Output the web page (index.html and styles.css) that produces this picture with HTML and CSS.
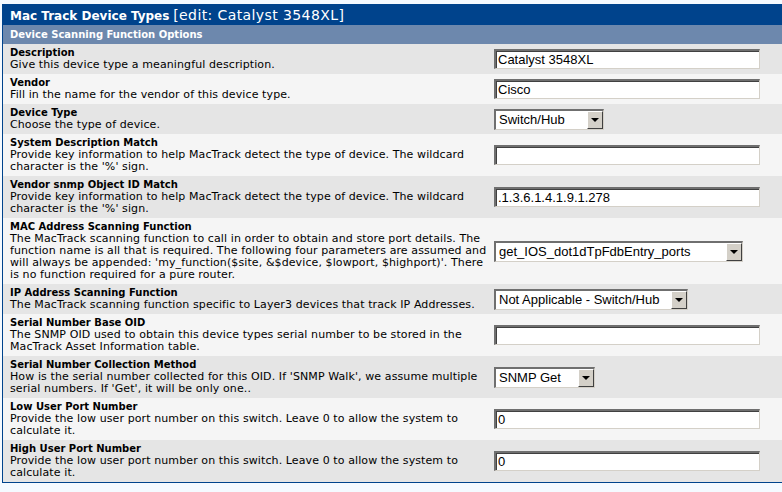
FILE: index.html
```html
<!DOCTYPE html>
<html>
<head>
<meta charset="utf-8">
<title>Mac Track Device Types</title>
<link rel="stylesheet" href="styles.css">
</head>
<body>
<div class="frame">
  <div class="head"><b>Mac Track Device Types</b> <span class="edit">[edit: Catalyst 3548XL]</span></div>
  <div class="sub">Device Scanning Function Options</div>

  <div class="row dark">
    <div class="lab"><div class="t">Description</div><div class="d">Give this device type a meaningful description.</div></div>
    <div class="fld"><input class="txt" type="text" value="Catalyst 3548XL"></div>
  </div>

  <div class="row light">
    <div class="lab"><div class="t">Vendor</div><div class="d">Fill in the name for the vendor of this device type.</div></div>
    <div class="fld"><input class="txt" type="text" value="Cisco"></div>
  </div>

  <div class="row dark">
    <div class="lab"><div class="t">Device Type</div><div class="d">Choose the type of device.</div></div>
    <div class="fld"><span class="combo w110"><select><option>Switch/Hub</option></select></span></div>
  </div>

  <div class="row light">
    <div class="lab"><div class="t">System Description Match</div><div class="d">Provide key information to help MacTrack detect the type of device. The wildcard character is the '%' sign.</div></div>
    <div class="fld"><input class="txt" type="text" value=""></div>
  </div>

  <div class="row dark">
    <div class="lab"><div class="t">Vendor snmp Object ID Match</div><div class="d">Provide key information to help MacTrack detect the type of device. The wildcard character is the '%' sign.</div></div>
    <div class="fld"><input class="txt" type="text" value=".1.3.6.1.4.1.9.1.278"></div>
  </div>

  <div class="row light">
    <div class="lab"><div class="t">MAC Address Scanning Function</div><div class="d">The MacTrack scanning function to call in order to obtain and store port details. The function name is all that is required. The following four parameters are assumed and will always be appended: 'my_function($site, &amp;$device, $lowport, $highport)'. There is no function required for a pure router.</div></div>
    <div class="fld"><span class="combo w249"><select><option>get_IOS_dot1dTpFdbEntry_ports</option></select></span></div>
  </div>

  <div class="row dark">
    <div class="lab"><div class="t">IP Address Scanning Function</div><div class="d">The MacTrack scanning function specific to Layer3 devices that track IP Addresses.</div></div>
    <div class="fld"><span class="combo w194"><select><option>Not Applicable - Switch/Hub</option></select></span></div>
  </div>

  <div class="row light">
    <div class="lab"><div class="t">Serial Number Base OID</div><div class="d">The SNMP OID used to obtain this device types serial number to be stored in the MacTrack Asset Information table.</div></div>
    <div class="fld"><input class="txt" type="text" value=""></div>
  </div>

  <div class="row dark">
    <div class="lab"><div class="t">Serial Number Collection Method</div><div class="d">How is the serial number collected for this OID. If 'SNMP Walk', we assume multiple serial numbers. If 'Get', it will be only one..</div></div>
    <div class="fld"><span class="combo w101"><select><option>SNMP Get</option></select></span></div>
  </div>

  <div class="row light">
    <div class="lab"><div class="t">Low User Port Number</div><div class="d">Provide the low user port number on this switch. Leave 0 to allow the system to calculate it.</div></div>
    <div class="fld"><input class="txt" type="text" value="0"></div>
  </div>

  <div class="row dark">
    <div class="lab"><div class="t">High User Port Number</div><div class="d">Provide the low user port number on this switch. Leave 0 to allow the system to calculate it.</div></div>
    <div class="fld"><input class="txt" type="text" value="0"></div>
  </div>
</div>
</body>
</html>
```

FILE: styles.css
```css
html, body {
  margin: 0;
  padding: 0;
  overflow: hidden;
  background: #f5faff;
}
body {
  padding: 4px 0 0 2px;
  font-family: "DejaVu Sans", Verdana, sans-serif;
}
.frame {
  width: 800px;
  border: 1px solid #00438c;
  background: #f5f5f5;
}
.head {
  background: #00438c;
  color: #fff;
  font-size: 12px;
  height: 20px;
  line-height: 20px;
  padding-left: 7px;
  white-space: nowrap;
}
.head .edit {
  font-size: 14px;
  letter-spacing: 0.4px;
}
.sub {
  background: #6d88ad;
  color: #fff;
  font-size: 10px;
  font-weight: bold;
  height: 19px;
  line-height: 19px;
  padding-left: 7px;
}
.row {
  display: flex;
  align-items: center;
  padding: 3px 0;
}
.row.light { background: #f5f5f5; }
.row.dark { background: #e5e5e5; }
.lab {
  width: 482px;
  padding-left: 7px;
  line-height: 12px;
  color: #000;
}
.lab .t {
  font-size: 10px;
  font-weight: bold;
}
.lab .d {
  font-size: 11px;
  letter-spacing: 0.1px;
}
.fld {
  padding-left: 2px;
  display: flex;
  align-items: center;
}
.txt {
  box-sizing: border-box;
  width: 266px;
  height: 20px;
  margin: 0;
  padding: 0 2px;
  font-family: "Liberation Sans", Arial, sans-serif;
  font-size: 13px;
  color: #000;
  background: #fff;
  border-style: solid;
  border-width: 2px 1px 1px 2px;
  border-color: #6f6f6f #d4d0c8 #d4d0c8 #6f6f6f;
  box-shadow: inset 1px 1px 0 #404040;
  outline: none;
}
.combo {
  position: relative;
  display: inline-block;
  box-sizing: border-box;
  height: 21px;
  background: #fff;
  border-style: solid;
  border-width: 2px 1px 1px 2px;
  border-color: #6f6f6f #d4d0c8 #d4d0c8 #6f6f6f;
}
.combo select {
  appearance: none;
  -webkit-appearance: none;
  border: 0;
  margin: 0;
  padding: 0 0 0 3px;
  width: 100%;
  height: 18px;
  background: transparent;
  font-family: "Liberation Sans", Arial, sans-serif;
  font-size: 13px;
  color: #000;
  outline: none;
  display: block;
}
.combo::after {
  content: "";
  position: absolute;
  top: 0;
  right: 0;
  width: 16px;
  height: 18px;
  box-sizing: border-box;
  background: #d4d0c8;
  border-style: solid;
  border-width: 1px;
  border-color: #fff #404040 #404040 #fff;
  pointer-events: none;
}
.combo::before {
  content: "";
  position: absolute;
  z-index: 1;
  top: 7px;
  right: 4px;
  width: 0;
  height: 0;
  border-left: 4px solid transparent;
  border-right: 4px solid transparent;
  border-top: 4px solid #000;
  pointer-events: none;
}
.w110 { width: 110px; }
.w249 { width: 249px; }
.w194 { width: 194px; }
.w101 { width: 101px; }
```
